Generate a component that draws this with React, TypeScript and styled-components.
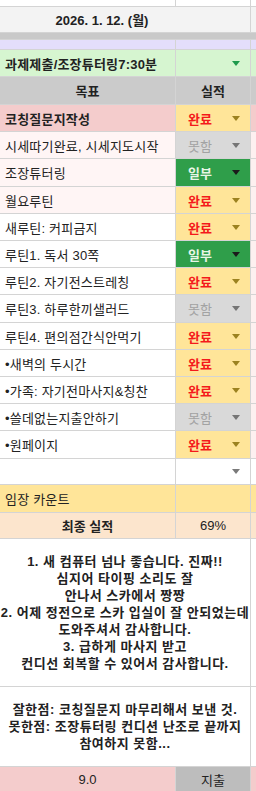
import styled, { createGlobalStyle } from "styled-components";

const GlobalStyle = createGlobalStyle`
	html, body {
		margin: 0;
		padding: 0;
		background: #ffffff;
	}
	body {
		font-family: "Liberation Sans", "Noto Sans CJK KR", sans-serif;
		color: #222222;
	}
`;

type Status = "done" | "fail" | "part" | "none";

const statusColors = {
	done: { bg: "#ffe599", text: "#f4191b", arrow: "#9c8220" },
	fail: { bg: "#d9d9d9", text: "#a2a2a2", arrow: "#757575" },
	part: { bg: "#2f9e4a", text: "#e8f5e6", arrow: "#1b1b1b" },
	none: { bg: "#ffffff", text: "#222222", arrow: "#7a7a7a" },
};

const Sheet = styled.div`
	width: 256px;
	display: flex;
	flex-direction: column;
	gap: 1px;
	background: #d4d4d4;
	overflow: hidden;
`;

const Row = styled.div<{ $h: number }>`
	display: grid;
	grid-template-columns: 175px 74px 1fr;
	gap: 1px;
	height: ${(p) => p.$h}px;
`;

const Cell = styled.div<{ $bg?: string; $span?: number }>`
	background: ${(p) => p.$bg || "#ffffff"};
	grid-column: span ${(p) => p.$span || 1};
	display: flex;
	align-items: center;
	min-width: 0;
	overflow: hidden;
	font-size: 13px;
`;

const Label = styled(Cell)<{ $bold?: boolean }>`
	padding-left: 5px;
	font-weight: ${(p) => (p.$bold ? 700 : 400)};
	white-space: nowrap;
	letter-spacing: 0.2px;
`;

const Centered = styled(Cell)<{ $bold?: boolean }>`
	justify-content: center;
	font-weight: ${(p) => (p.$bold ? 700 : 400)};
	white-space: nowrap;
`;

const DateCell = styled(Centered)`
	padding-right: 46px;
	font-weight: 700;
`;

const Select = styled(Cell)<{ $status: Status }>`
	background: ${(p) => statusColors[p.$status].bg};
	color: ${(p) => statusColors[p.$status].text};
	justify-content: space-between;
	padding: 0 10px 0 12px;
	font-weight: ${(p) => (p.$status === "fail" ? 400 : 700)};
`;

const Arrow = styled.span<{ $color: string }>`
	width: 0;
	height: 0;
	margin-left: auto;
	border-left: 4px solid transparent;
	border-right: 4px solid transparent;
	border-top: 5px solid ${(p) => p.$color};
`;

const Note = styled(Cell)`
	flex-direction: column;
	justify-content: center;
	font-weight: 700;
	font-size: 13px;
	line-height: 17px;
	letter-spacing: 0.5px;
`;

const NoteLine = styled.span`
	white-space: nowrap;
	flex-shrink: 0;
`;

const statusLabel: Record<Status, string> = {
	done: "완료",
	fail: "못함",
	part: "일부",
	none: "",
};

const goals: { text: string; status: Status; bg?: string; side?: string; bold?: boolean }[] = [
	{ text: "코칭질문지작성", status: "done", bg: "#f4cccc", side: "#f4cccc", bold: true },
	{ text: "시세따기완료, 시세지도시작", status: "fail", bg: "#fff5f5" },
	{ text: "조장튜터링", status: "part", bg: "#fff5f5" },
	{ text: "월요루틴", status: "done", bg: "#fff5f5" },
	{ text: "새루틴: 커피금지", status: "done" },
	{ text: "루틴1. 독서 30쪽", status: "part" },
	{ text: "루틴2. 자기전스트레칭", status: "done" },
	{ text: "루틴3. 하루한끼샐러드", status: "fail" },
	{ text: "루틴4. 편의점간식안먹기", status: "done" },
	{ text: "•새벽의 두시간", status: "done" },
	{ text: "•가족: 자기전마사지&칭찬", status: "done" },
	{ text: "•쓸데없는지출안하기", status: "fail" },
	{ text: "•원페이지", status: "done" },
];

const rowHeights = [26, 26, 27, 26, 26, 26, 26, 27, 26, 26, 26, 26, 27];

const gratitude = [
	"1. 새 컴퓨터 넘나 좋습니다. 진짜!!",
	"심지어 타이핑 소리도 잘",
	"안나서 스카에서 짱짱",
	"2. 어제 정전으로 스카 입실이 잘 안되었는데",
	"도와주셔서 감사합니다.",
	"3. 급하게 마사지 받고",
	"컨디선 회복할 수 있어서 감사합니다.",
];

const review = [
	"잘한점: 코칭질문지 마무리해서 보낸 것.",
	"못한점: 조장튜터링 컨디션 난조로 끝까지",
	"참여하지 못함...",
];

function App() {
	return (
		<>
			<GlobalStyle />
			<Sheet>
				<Row $h={6}>
					<Cell />
					<Cell />
					<Cell />
				</Row>
				<Row $h={25}>
					<DateCell $bg="#f3f3f3" $span={2}>
						2026. 1. 12. (월)
					</DateCell>
					<Cell $bg="#f3f3f3" />
				</Row>
				<Row $h={6} style={{ gap: 0 }}>
					<Cell $bg="#c9c9c9" $span={3} />
				</Row>
				<Row $h={9}>
					<Cell $bg="#e4defb" />
					<Cell $bg="#e4defb" />
					<Cell $bg="#e4defb" />
				</Row>
				<Row $h={26}>
					<Label $bg="#d6f5d0" $bold>
						과제제출/조장튜터링7:30분
					</Label>
					<Select $status="none" style={{ background: "#d6f5d0" }}>
						<Arrow $color="#1e9a4c" />
					</Select>
					<Cell $bg="#d6f5d0" />
				</Row>
				<Row $h={27}>
					<Centered $bg="#cbcbcb" $bold>
						목표
					</Centered>
					<Centered $bg="#cbcbcb" $bold>
						실적
					</Centered>
					<Cell $bg="#cbcbcb" />
				</Row>
				{goals.map((g, i) => (
					<Row $h={rowHeights[i]} key={g.text}>
						<Label $bg={g.bg} $bold={g.bold}>
							{g.text}
						</Label>
						<Select $status={g.status}>
							{statusLabel[g.status]}
							<Arrow $color={statusColors[g.status].arrow} />
						</Select>
						<Cell $bg={g.side || "#fdf0f0"} />
					</Row>
				))}
				<Row $h={25}>
					<Cell />
					<Select $status="none">
						<Arrow $color={statusColors.none.arrow} />
					</Select>
					<Cell />
				</Row>
				<Row $h={27}>
					<Label $bg="#ffe599">임장 카운트</Label>
					<Cell $bg="#ffe599" />
					<Cell $bg="#ffe599" />
				</Row>
				<Row $h={25}>
					<Centered $bg="#fce5cd" $bold>
						최종 실적
					</Centered>
					<Centered $bg="#fce5cd">69%</Centered>
					<Cell $bg="#fce5cd" />
				</Row>
				<Row $h={147}>
					<Note $span={2}>
						{gratitude.map((line) => (
							<NoteLine key={line}>{line}</NoteLine>
						))}
					</Note>
					<Cell />
				</Row>
				<Row $h={79}>
					<Note $span={2}>
						{review.map((line) => (
							<NoteLine key={line}>{line}</NoteLine>
						))}
					</Note>
					<Cell />
				</Row>
				<Row $h={24}>
					<Centered $bg="#f4cccc">9.0</Centered>
					<Centered $bg="#bdbdbd">지출</Centered>
					<Cell $bg="#f4cccc" />
				</Row>
			</Sheet>
		</>
	);
}

export default App;
